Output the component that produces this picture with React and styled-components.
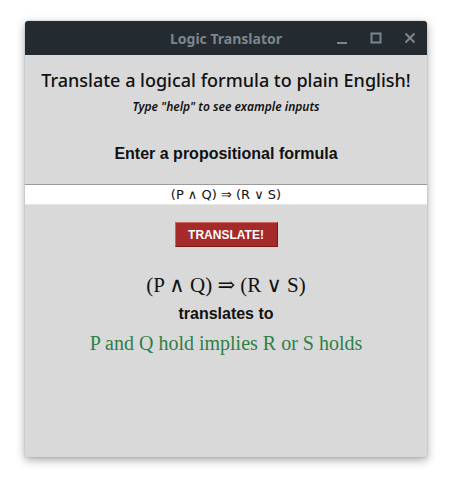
import styled, { createGlobalStyle } from "styled-components"

const Global = createGlobalStyle`
  html, body { margin: 0; padding: 0; background: #fff; }
  body { width: 451px; height: 485px; overflow: hidden; }
`

const Page = styled.div`
  padding: 21px 0 0 25px;
`

const Window = styled.div`
  width: 402px;
  height: 436px;
  display: flex;
  flex-direction: column;
  border-radius: 3px 3px 0 0;
  overflow: hidden;
  box-shadow: 0 3px 10px rgba(0,0,0,0.35), 0 0 2px rgba(0,0,0,0.2);
`

const TitleBar = styled.div`
  height: 34px;
  flex: none;
  background: #232b30;
  display: flex;
  align-items: center;
  position: relative;
`

const Title = styled.div`
  flex: 1;
  text-align: center;
  font-family: "Noto Sans", sans-serif;
  font-weight: bold;
  font-size: 14px;
  color: #7c868c;
`

const Controls = styled.div`
  position: absolute;
  right: 10px;
  top: 0;
  height: 34px;
  display: flex;
  align-items: center;
  gap: 20px;
`

const Content = styled.div`
  flex: 1;
  background: #d9d9d9;
  display: flex;
  flex-direction: column;
  align-items: center;
`

const Heading = styled.h1`
  margin: 13px 0 0;
  font-family: "Noto Sans", sans-serif;
  font-weight: 500;
  font-size: 18px;
  color: #111;
`

const Hint = styled.div`
  margin-top: 6px;
  font-family: "Noto Sans", sans-serif;
  font-style: italic;
  font-weight: 600;
  font-size: 12px;
  color: #111;
`

const Label = styled.div`
  margin-top: 30px;
  font-family: "Liberation Sans", Arial, sans-serif;
  font-weight: bold;
  font-size: 16px;
  color: #111;
`

const Input = styled.input`
  margin-top: 21px;
  width: 100%;
  box-sizing: border-box;
  height: 21px;
  border: none;
  border-top: 1px solid #9a9a9a;
  border-bottom: 1px solid #e6e6e6;
  background: #fff;
  text-align: center;
  font-family: "DejaVu Sans", sans-serif;
  font-size: 13px;
  color: #111;
  padding: 0;
  outline: none;
`

const Button = styled.button`
  margin-top: 17px;
  width: 103px;
  height: 25px;
  background: #a52a2a;
  border: 1px solid #c86666;
  border-right-color: #7a1c1c;
  border-bottom-color: #7a1c1c;
  color: #fff;
  font-family: "Liberation Sans", Arial, sans-serif;
  font-weight: bold;
  font-size: 12px;
  padding: 0;
`

const Formula = styled.div`
  margin-top: 26px;
  font-family: "Liberation Serif", "DejaVu Serif", serif;
  font-size: 21px;
  color: #111;
`

const Connector = styled.div`
  margin-top: 7px;
  font-family: "Liberation Sans", Arial, sans-serif;
  font-weight: bold;
  font-size: 16px;
  color: #111;
`

const Result = styled.div`
  margin-top: 9px;
  font-family: "Liberation Serif", serif;
  font-size: 20px;
  color: #2e8046;
`

const Icon = ({ children }) => (
  <svg width="14" height="14" viewBox="0 0 14 14" fill="none" stroke="#7c868c" strokeWidth="2">
    {children}
  </svg>
)

export default function App() {
  return (
    <>
      <Global />
      <Page>
        <Window>
          <TitleBar>
            <Title>Logic Translator</Title>
            <Controls>
              <Icon><path d="M2 12h10" /></Icon>
              <Icon><rect x="2.5" y="2.5" width="9" height="9" /></Icon>
              <Icon><path d="M2.5 2.5l9 9M11.5 2.5l-9 9" /></Icon>
            </Controls>
          </TitleBar>
          <Content>
            <Heading>Translate a logical formula to plain English!</Heading>
            <Hint>Type "help" to see example inputs</Hint>
            <Label>Enter a propositional formula</Label>
            <Input defaultValue="(P ∧ Q) ⇒ (R ∨ S)" />
            <Button>TRANSLATE!</Button>
            <Formula>(P ∧ Q) ⇒ (R ∨ S)</Formula>
            <Connector>translates to</Connector>
            <Result>P and Q hold implies R or S holds</Result>
          </Content>
        </Window>
      </Page>
    </>
  )
}
